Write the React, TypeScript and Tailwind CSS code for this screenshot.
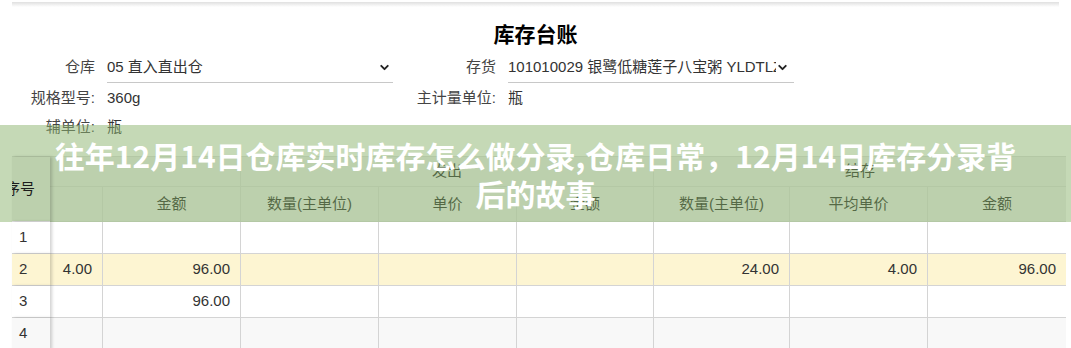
import React from 'react';
import { ChevronDown } from 'lucide-react';

const cols = 'grid grid-cols-[38px_53px_138px_138px_138px_137px_136px_138px_138px]';

const rows = [
    { no: '1', cells: ['', '', '', '', '', '', '', ''], bg: 'bg-white' },
    { no: '2', cells: ['4.00', '96.00', '', '', '', '24.00', '4.00', '96.00'], bg: 'bg-[#fdf5d2]' },
    { no: '3', cells: ['', '96.00', '', '', '', '', '', ''], bg: 'bg-white' },
    { no: '4', cells: ['', '', '', '', '', '', '', ''], bg: 'bg-[#f8f8f8]' },
];

const subHeads = ['', '金额', '数量(主单位)', '单价', '金额', '数量(主单位)', '平均单价', '金额'];

const App = () => {
    return (
        <div className="relative w-[1071px] h-[348px] overflow-hidden bg-white text-[#333] font-['Liberation_Sans','Noto_Sans_CJK_SC',sans-serif]">
            <div className="mx-[12px] mt-[2px] h-[5px] bg-linear-to-b from-[#e0e0e0] to-white" />
            <h1 className="mt-[14px] text-center text-[21px] leading-[28px] font-bold text-black">库存台账</h1>

            {/* form */}
            <div className="mt-[3px] flex h-[31px] items-center text-[15px]">
                <div className="w-[95px] text-right text-[#444]">仓库</div>
                <div className="ml-[12px] w-[286px] h-full flex items-center justify-between border-b border-[#c8c8c8] pr-[2px]">
                    <span>05 直入直出仓</span>
                    <ChevronDown size={13} strokeWidth={3.5} className="text-[#222]" />
                </div>
                <div className="w-[103px] text-right text-[#444]">存货</div>
                <div className="ml-[12px] w-[286px] h-full flex items-center border-b border-[#c8c8c8] pr-[5px]">
                    <span className="overflow-hidden whitespace-nowrap flex-1">101010029 银鹭低糖莲子八宝粥 YLDTLZ</span>
                    <ChevronDown size={13} strokeWidth={3.5} className="text-[#222] shrink-0" />
                </div>
            </div>
            <div className="flex h-[30px] items-center text-[15px]">
                <div className="w-[95px] text-right text-[#444]">规格型号:</div>
                <div className="ml-[12px] w-[286px]">360g</div>
                <div className="w-[103px] text-right text-[#444]">主计量单位:</div>
                <div className="ml-[12px] w-[286px]">瓶</div>
            </div>
            <div className="flex h-[28px] items-center text-[15px]">
                <div className="w-[95px] text-right text-[#444]">辅单位:</div>
                <div className="ml-[12px] w-[286px]">瓶</div>
            </div>

            {/* table */}
            <div className="mt-[15px] ml-[12px] w-[1054px] text-[15px]">
                <div className={`${cols} grid-rows-[30px_35px] bg-[#ececec] text-[#1c1c1c] border-t border-[#dcdcdc]`}>
                    <div className="row-span-2 overflow-hidden flex items-center border-b border-[#dcdcdc] relative z-10 shadow-[2px_0_3px_rgba(0,0,0,0.18)]">
                        <span className="-ml-[7px] whitespace-nowrap">序号</span>
                    </div>
                    <div className="col-span-2 border-r border-b border-[#dcdcdc]" />
                    <div className="col-span-3 flex items-center justify-center border-r border-b border-[#dcdcdc]">发出</div>
                    <div className="col-span-3 flex items-center justify-center border-b border-[#dcdcdc]">结存</div>
                    {subHeads.map((h, i) => (
                        <div key={i} className={`flex items-center justify-center border-b border-[#dcdcdc] ${i < 7 ? 'border-r' : ''}`}>
                            {h}
                        </div>
                    ))}
                </div>
                {rows.map((r) => (
                    <div key={r.no} className={`${cols} h-[32px] ${r.bg}`}>
                        <div className={`relative z-10 flex items-center pl-[7px] border-b border-[#d4d4d4] shadow-[2px_0_3px_rgba(0,0,0,0.18)] ${r.bg}`}>
                            {r.no}
                        </div>
                        {r.cells.map((c, i) => (
                            <div key={i} className={`flex items-center justify-end pr-[10px] border-b border-[#d4d4d4] ${i < 7 ? 'border-r' : ''}`}>
                                {c}
                            </div>
                        ))}
                    </div>
                ))}
            </div>

            {/* overlay */}
            <div className="absolute left-0 top-[125px] w-full h-[97px] bg-[rgba(140,180,110,0.5)] flex flex-col items-center justify-center text-white font-bold text-[30px] leading-[38px] font-['Noto_Sans_CJK_SC',sans-serif]">
                <div>往年12月14日仓库实时库存怎么做分录,仓库日常，12月14日库存分录背</div>
                <div>后的故事</div>
            </div>
        </div>
    );
};

export default App;
